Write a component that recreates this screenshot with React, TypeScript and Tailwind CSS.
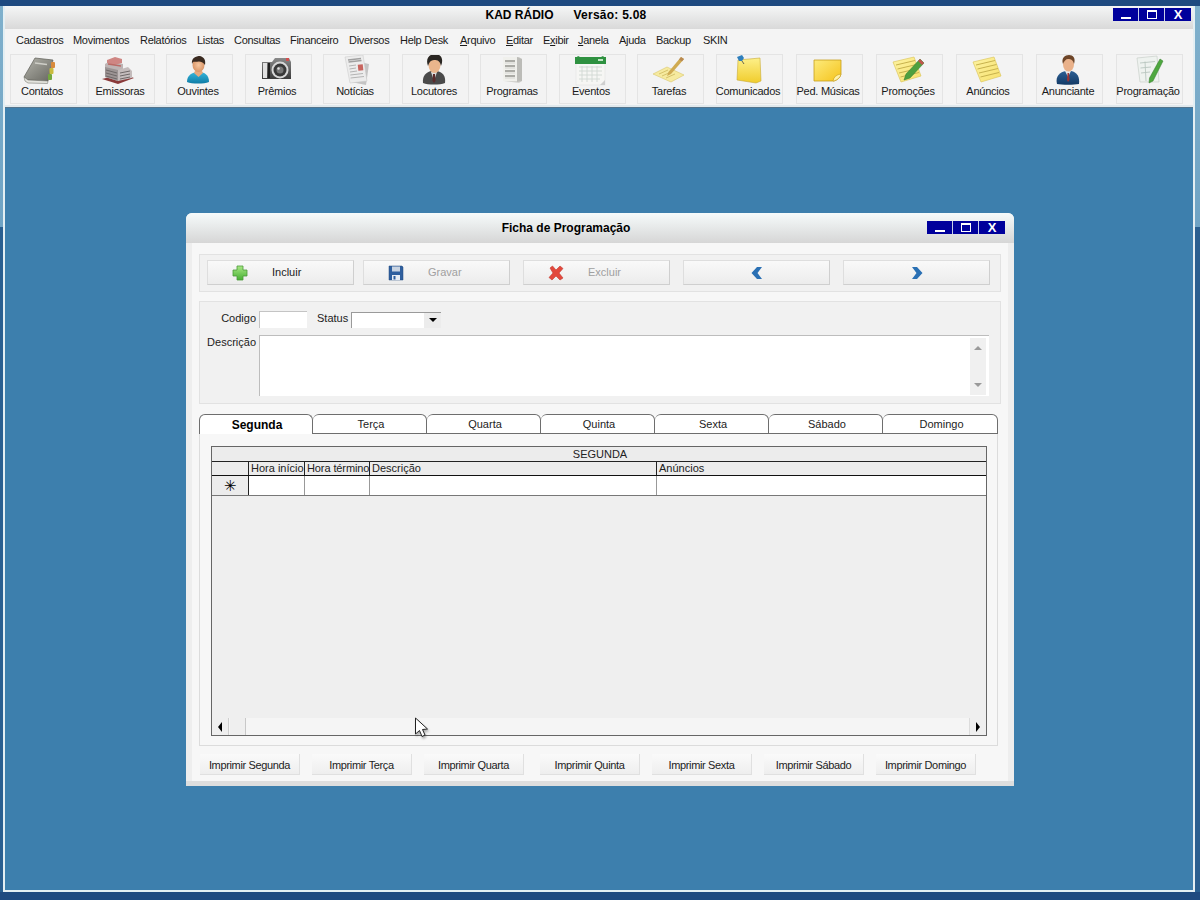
import React from "react";

const FONT = "font-['Liberation_Sans',Arial,sans-serif]";

function Contatos() {
  return (
    <svg width="48" height="32" viewBox="0 0 48 32">
      <defs>
        <linearGradient id="c1" x1="0" y1="0" x2="1" y2="1"><stop offset="0" stopColor="#b4b4ac" /><stop offset="1" stopColor="#66665f" /></linearGradient>
      </defs>
      <path d="M6 22 L17 3 L35 5 L30 26 L10 25 Z" fill="url(#c1)" stroke="#5d5d56" strokeWidth=".7" />
      <path d="M6 22 L10 25 L30 26 L29.5 28.5 L10 28 Q6 27 6 22 Z" fill="#e4e4de" stroke="#66665f" strokeWidth=".5" />
      <path d="M17 8 L29 9.5" stroke="#cfcfc8" strokeWidth="1.5" />
      <rect x="33" y="7" width="4" height="6" rx="1" fill="#d98a3c" />
      <rect x="31.5" y="13" width="4" height="6" rx="1" fill="#c9bb3e" />
      <rect x="30" y="19" width="4" height="6" rx="1" fill="#74a83e" />
    </svg>
  );
}
function Emissoras() {
  return (
    <svg width="48" height="32" viewBox="0 0 48 32">
      <path d="M6 24 L22 29 L38 23 L26 19 Z" fill="#8a3a3a" />
      <path d="M9 9 L14 6 L27 9 L27 23 L22 26 L9 22 Z" fill="#bdb4b4" />
      <path d="M11 5 L19 2 L26 4 L26 8 L18 10 L11 8 Z" fill="#cf8683" />
      <path d="M9 12 L22 15 L22 26 L9 22 Z" fill="#9c9494" />
      <path d="M22 15 L32 12 L36 16 L36 23 L22 26 Z" fill="#c4bcbc" />
      <path d="M10 15 L21 18 M10 18 L21 21 M10 21 L21 24 M24 18 L34 16 M24 21 L34 19 M24 24 L34 22" stroke="#6e6868" strokeWidth="1" />
      <path d="M12 9 L25 11" stroke="#bb6a66" strokeWidth="1.5" />
    </svg>
  );
}
function Ouvintes() {
  return (
    <svg width="48" height="32" viewBox="0 0 48 32">
      <defs>
        <linearGradient id="o1" x1="0" y1="0" x2="0" y2="1"><stop offset="0" stopColor="#35b6dc" /><stop offset="1" stopColor="#0f7ca6" /></linearGradient>
        <radialGradient id="o2"><stop offset="0" stopColor="#f6c6a0" /><stop offset="1" stopColor="#d99567" /></radialGradient>
      </defs>
      <path d="M13 27 C13 20 18 17.5 24 17 C31 17 35 20 35 27 C30 29 18 29 13 27 Z" fill="url(#o1)" />
      <path d="M20 18 L24.5 22 L29 18 L27 14 L22 14 Z" fill="#e6a87e" />
      <ellipse cx="24.5" cy="10" rx="6" ry="7" fill="url(#o2)" />
      <path d="M18 9 C17 3 22 1 26 1 C30 2 32 5 31 10 C29 7 27 6.5 25 6.5 C22 7 20 6.5 19 7 Z" fill="#3a2a20" />
    </svg>
  );
}
function Premios() {
  return (
    <svg width="48" height="32" viewBox="0 0 48 32">
      <defs>
        <linearGradient id="p1" x1="0" y1="0" x2="0" y2="1"><stop offset="0" stopColor="#8a8a8a" /><stop offset="1" stopColor="#3a3a3a" /></linearGradient>
      </defs>
      <path d="M9 7 H19 L22 3 H36 L38 7 V24 H9 Z" fill="url(#p1)" />
      <rect x="10" y="8" width="4" height="15" fill="#e0e0e0" />
      <rect x="15" y="8" width="2" height="15" fill="#1f1f1f" />
      <circle cx="27" cy="15" r="8.5" fill="#d7d7d7" />
      <circle cx="27" cy="15" r="6.5" fill="#383838" />
      <circle cx="27" cy="15" r="3.5" fill="#777" />
      <circle cx="25.5" cy="13.5" r="1.2" fill="#ddd" />
      <rect x="33" y="3" width="3" height="3" fill="#d05050" />
    </svg>
  );
}
function Noticias() {
  return (
    <svg width="48" height="32" viewBox="0 0 48 32">
      <path d="M19 5 L38 9 L35 30 L20 27 Z" fill="#c4c4c4" />
      <path d="M14 2 L32 0 L36 26 L19 28 Z" fill="#ececec" stroke="#c6c6c6" strokeWidth=".5" />
      <path d="M17 5 L30 3.5 M17.5 7 L30.5 5.5" stroke="#a0a0a0" strokeWidth="1.4" />
      <path d="M18 11 L25 10 M18.5 14 L25 13 M19 17 L26 16 M19.3 20 L32 18.5 M19.6 23 L33 21.5" stroke="#b4b4b4" strokeWidth="1" />
      <rect x="27" y="9.5" width="5" height="6" fill="#c8655f" transform="rotate(-6 29 12)" />
    </svg>
  );
}
function Locutores() {
  return (
    <svg width="48" height="32" viewBox="0 0 48 32">
      <path d="M13 28 C12 20 17 17 21 16 H27 C32 17 36 20 35 28 C30 30 18 30 13 28 Z" fill="#4a4a4a" />
      <path d="M21 17 L24 26 L27 17 Z" fill="#dcdcdc" />
      <path d="M23 19 H25 L25.5 26 L24 28 L22.5 26 Z" fill="#5c2a2a" />
      <ellipse cx="24.5" cy="10" rx="6" ry="8" fill="#eab58c" />
      <path d="M18 11 C15 3 20 -1 25 -1 C31 -1 34 4 31 11 C30 6 28 5 24 5 C21 5 19 7 18 11 Z" fill="#2a2622" />
    </svg>
  );
}
function Programas() {
  return (
    <svg width="48" height="32" viewBox="0 0 48 32">
      <path d="M15 2 H31 L34 4 V26 L31 28 L16 26 Z" fill="#d4d4d0" />
      <path d="M15 2 H29 V26 H15 Z" fill="#f0f0ec" />
      <path d="M29 2 L34 4 V26 L29 27 Z" fill="#bcbcb8" />
      <path d="M17 6 H27 M17 11 H27 M17 16 H27 M17 21 H27" stroke="#94948f" strokeWidth="1.6" />
      <path d="M17 8 H27 M17 13 H27 M17 18 H27 M17 23 H27" stroke="#d4d4d0" strokeWidth="1" />
    </svg>
  );
}
function Eventos() {
  return (
    <svg width="48" height="32" viewBox="0 0 48 32">
      <rect x="9" y="4" width="29" height="26" fill="#f6f6f4" stroke="#ddd" strokeWidth=".5" />
      <path d="M8 2 H10 L11 1 L13 2 H34 L36 1 L37 2 H39 V9 H8 Z" fill="#2e9140" />
      <rect x="31" y="4" width="5" height="2" fill="#bfe5c3" />
      <path d="M12 12 H35 M12 16 H35 M12 20 H35 M12 24 H33 M15 11 V27 M20 11 V27 M25 11 V27 M30 11 V27" stroke="#d0d8d2" strokeWidth=".9" />
      <path d="M33 30 L38 25 V30 Z" fill="#cfcfcf" />
    </svg>
  );
}
function Tarefas() {
  return (
    <svg width="48" height="32" viewBox="0 0 48 32">
      <path d="M8 19 L22 12 L39 20 L26 27 Z" fill="#f6ea9f" stroke="#d8c66c" strokeWidth=".6" />
      <path d="M14 19 L23 15 M17 21 L26 17 M21 23 L30 19" stroke="#cdb85d" strokeWidth=".8" />
      <path d="M36 2 L39 4 L26 19 L22 21 L23.5 17 Z" fill="#d0ab52" />
      <path d="M36 2 L39 4 L37 6.5 L34 4.5 Z" fill="#b98a52" />
    </svg>
  );
}
function Comunicados() {
  return (
    <svg width="48" height="32" viewBox="0 0 48 32">
      <defs>
        <linearGradient id="k1" x1="0" y1="0" x2="0" y2="1"><stop offset="0" stopColor="#fdf089" /><stop offset="1" stopColor="#f0cc2c" /></linearGradient>
      </defs>
      <path d="M14 5 L36 3 L37 26 L32 28 L13 25 Z" fill="url(#k1)" stroke="#c7a936" strokeWidth=".6" />
      <path d="M13 2 L18 0 L20 3 L18 6 L15 6 Z" fill="#2f7fbd" />
      <path d="M18 6 L20 9" stroke="#444" strokeWidth=".8" />
    </svg>
  );
}
function PedMusicas() {
  return (
    <svg width="48" height="32" viewBox="0 0 48 32">
      <defs>
        <linearGradient id="m1" x1="0" y1="0" x2="1" y2="1"><stop offset="0" stopColor="#fdeb7b" /><stop offset="1" stopColor="#f5c31c" /></linearGradient>
      </defs>
      <path d="M10 5 H37 V19 Q36 24 30 26 H10 Z" fill="url(#m1)" stroke="#c69e1d" strokeWidth=".8" />
      <path d="M29 26 Q30 20 37 19 Q36 24 30 26 Z" fill="#fff2a8" stroke="#c69e1d" strokeWidth=".6" />
    </svg>
  );
}
function Note({ id }: { id: string }) {
  return (
    <>
      <defs>
        <linearGradient id={id} x1="0" y1="0" x2="1" y2="1"><stop offset="0" stopColor="#fdf3a3" /><stop offset="1" stopColor="#f7e06b" /></linearGradient>
      </defs>
      <path d="M9 7 L30 2 L37 21 L17 27 Z" fill={`url(#${id})`} stroke="#dcc760" strokeWidth=".7" />
      <path d="M12 10 L31 5.5 M13.5 14 L32.5 9.5 M15 18 L34 13.5 M16.5 22 L35 17.5" stroke="#c7b24e" strokeWidth="1" />
    </>
  );
}
function Promocoes() {
  return (
    <svg width="48" height="32" viewBox="0 0 48 32">
      <Note id="n1" />
      <path d="M36 4 L40 8 L26 23 L20 25 L22 19 Z" fill="#4ea03f" stroke="#2f7a2a" strokeWidth=".5" />
      <path d="M36 4 L40 8 L38 10 L34 6 Z" fill="#c2544c" />
    </svg>
  );
}
function Anuncios() {
  return (
    <svg width="48" height="32" viewBox="0 0 48 32">
      <Note id="n2" />
    </svg>
  );
}
function Anunciante() {
  return (
    <svg width="48" height="32" viewBox="0 0 48 32">
      <defs>
        <linearGradient id="a1" x1="0" y1="0" x2="0" y2="1"><stop offset="0" stopColor="#2c5f94" /><stop offset="1" stopColor="#133a66" /></linearGradient>
      </defs>
      <path d="M13 29 C11 21 16 17 22 16 H27 C33 17 36 22 35 29 C30 30 18 30 13 29 Z" fill="url(#a1)" />
      <path d="M21 16 L24 22 L27 16 Z" fill="#e8e8e8" />
      <path d="M23.5 18 H25 L25.5 25 L24 27 L23 25 Z" fill="#9a3434" />
      <ellipse cx="24.5" cy="9.5" rx="5.5" ry="7" fill="#e9b18a" />
      <path d="M19 9 C17 3 21 0 25 0 C29 0 32 3 30 9 C29 5 27 4 24 4 C22 4 20 6 19 9 Z" fill="#6d4528" />
    </svg>
  );
}
function Programacao() {
  return (
    <svg width="48" height="32" viewBox="0 0 48 32">
      <path d="M13 3 L33 1 L35 27 L16 27 Z" fill="#eef2ef" stroke="#c8d0ca" strokeWidth=".7" />
      <path d="M16 8 L31 6.5 M16.5 13 L27 12 M17 18 L26 17 M21 6.5 L22 26" stroke="#b9c6bf" strokeWidth=".9" />
      <path d="M36 4 L39 6 L29 26 L25 28 L25.5 23 Z" fill="#4ea83f" stroke="#327a2a" strokeWidth=".5" />
    </svg>
  );
}

const TOOLS: [string, React.FC][] = [
  ["Contatos", Contatos],
  ["Emissoras", Emissoras],
  ["Ouvintes", Ouvintes],
  ["Prêmios", Premios],
  ["Notícias", Noticias],
  ["Locutores", Locutores],
  ["Programas", Programas],
  ["Eventos", Eventos],
  ["Tarefas", Tarefas],
  ["Comunicados", Comunicados],
  ["Ped. Músicas", PedMusicas],
  ["Promoções", Promocoes],
  ["Anúncios", Anuncios],
  ["Anunciante", Anunciante],
  ["Programação", Programacao],
];

function WinButtons() {
  return (
    <div className="flex h-[13px] w-[78px] bg-[#00009c]">
      <div className="flex w-[25px] items-end justify-center pb-[2px]">
        <div className="h-[2px] w-[10px] bg-white" />
      </div>
      <div className="flex w-[27px] items-center justify-center border-x border-[#c8d0e8]">
        <div className="h-[9px] w-[10px] border border-t-2 border-white" />
      </div>
      <div className="flex w-[26px] items-center justify-center text-[13px] leading-none font-bold text-white">X</div>
    </div>
  );
}

function MenuBar() {
  const items: [string, string?][] = [
    ["Cadastros"],
    ["Movimentos"],
    ["Relatórios"],
    ["Listas"],
    ["Consultas"],
    ["Financeiro"],
    ["Diversos"],
    ["Help Desk"],
    ["Arquivo", "A"],
    ["Editar", "E"],
    ["Exibir", "x"],
    ["Janela", "J"],
    ["Ajuda"],
    ["Backup"],
    ["SKIN"],
  ];
  return (
    <div className="grid h-[21px] grid-cols-[57px_67px_57px_37px_56px_59px_51px_60px_46px_37px_35px_41px_37px_47px_40px] items-center bg-[#f4f4f4] pt-[1px] pl-[11px] text-[11px] tracking-[-0.3px] text-[#1a1a1a]">
      {items.map(([label, u]) => {
        if (!u) return <span key={label}>{label}</span>;
        const i = label.indexOf(u);
        return (
          <span key={label}>
            {label.slice(0, i)}
            <span className="underline">{u}</span>
            {label.slice(i + 1)}
          </span>
        );
      })}
    </div>
  );
}

function Toolbar() {
  return (
    <div className="relative grid h-[57px] shrink-0 grid-cols-[78px_78px_79px_78px_79px_78px_79px_78px_79px_80px_80px_80px_80px_80px_67px] border-b-2 border-[#e0e8ec] bg-[#f4f4f4] pt-[4px] pl-[5px] shadow-[0_1px_0_#54748c]">
      {TOOLS.map(([label, Icon]) => (
        <div
          key={label}
          className="flex h-[50px] w-[67px] flex-col items-center border border-[#e4e4e4] bg-[#f3f3f3] pr-[3px]"
        >
          <div className="h-[29px]">
            <Icon />
          </div>
          <span className="text-[11px] leading-[14px] tracking-[-0.25px] whitespace-nowrap text-[#1a1a1a]">{label}</span>
        </div>
      ))}
    </div>
  );
}

function PlusIcon() {
  return (
    <svg width="16" height="16" viewBox="0 0 16 16">
      <defs>
        <linearGradient id="pl" x1="0" y1="0" x2="0" y2="1"><stop offset="0" stopColor="#a8e884" /><stop offset="1" stopColor="#46b033" /></linearGradient>
      </defs>
      <path d="M5 1 H11 V5 H15 V11 H11 V15 H5 V11 H1 V5 H5 Z" fill="url(#pl)" stroke="#4b9a3a" strokeWidth=".8" />
    </svg>
  );
}
function SaveIcon() {
  return (
    <svg width="16" height="16" viewBox="0 0 16 16">
      <path d="M1 1 H14 L15 2 V15 H1 Z" fill="#2f5f9e" stroke="#23497c" strokeWidth=".5" />
      <rect x="4" y="1.5" width="8" height="5" fill="#c9d4e2" />
      <rect x="4" y="10" width="8" height="5" fill="#e8edf3" />
      <rect x="5.5" y="11" width="2" height="3.5" fill="#2f5f9e" />
    </svg>
  );
}
function XIcon() {
  return (
    <svg width="16" height="16" viewBox="0 0 16 16">
      <path d="M2 3 L4.5 1 L8 5 L12 1 L15 3.5 L11 8 L15 13 L12 15 L8 11 L4 15 L1 12.5 L5 8 Z" fill="#e2483c" stroke="#c23a30" strokeWidth=".6" />
    </svg>
  );
}
function Chevron({ right }: { right?: boolean }) {
  return (
    <svg width="12" height="14" viewBox="0 0 12 14">
      <path d={right ? "M1 1 H6 L11.5 7 L6 13 H1 L5.5 7 Z" : "M11 1 H6 L.5 7 L6 13 H11 L6.5 7 Z"} fill="#2a70b4" />
    </svg>
  );
}

const BTN =
  "h-[25px] w-[147px] border border-[#dedede] border-b-[#cfcfcf] border-r-[#cfcfcf] bg-gradient-to-b from-[#f9f9f9] to-[#ececec] flex items-center";

function ActionBar() {
  return (
    <div className="grid h-[38px] grid-cols-[156px_160px_160px_160px_147px] border border-[#e2e2e2] bg-[#f1f1f1] pt-[5px] pl-[7px] text-[11px]">
      <div className={`${BTN} pl-[24px]`}>
        <PlusIcon />
        <span className="ml-[24px] text-[#222]">Incluir</span>
      </div>
      <div className={`${BTN} pl-[24px]`}>
        <SaveIcon />
        <span className="ml-[24px] text-[#a0a0a0]">Gravar</span>
      </div>
      <div className={`${BTN} pl-[24px]`}>
        <XIcon />
        <span className="ml-[24px] text-[#a0a0a0]">Excluir</span>
      </div>
      <div className={`${BTN} justify-center`}>
        <Chevron />
      </div>
      <div className={`${BTN} justify-center`}>
        <Chevron right />
      </div>
    </div>
  );
}

function FormPanel() {
  return (
    <div className="mt-[9px] h-[103px] border border-[#e2e2e2] bg-[#f1f1f1] pt-[9px] pl-[7px] text-[11px] text-[#222]">
      <div className="flex h-[17px] items-center">
        <span className="w-[49px] pb-[2px] text-right">Codigo</span>
        <div className="ml-[3px] h-[17px] w-[48px] border-t border-l border-[#c4c4c4] bg-white" />
        <span className="ml-[10px] w-[31px] pb-[2px]">Status</span>
        <div className="ml-[3px] flex h-[16px] w-[90px] justify-end border-t border-l border-[#9a9a9a] bg-white">
          <div className="flex w-[17px] items-center justify-center bg-[#ececec]">
            <div className="h-0 w-0 border-x-[4px] border-t-[4px] border-x-transparent border-t-black" />
          </div>
        </div>
      </div>
      <div className="mt-[7px] flex">
        <span className="-mt-[1px] w-[49px] text-right">Descrição</span>
        <div className="ml-[3px] flex h-[61px] w-[730px] justify-end border-t border-l border-[#bdbdbd] bg-white">
          <div className="mt-[2px] mr-[3px] flex h-[57px] w-[16px] flex-col items-center justify-between bg-[#f0f0f0] py-[8px]">
            <div className="h-0 w-0 border-x-[4px] border-b-[4px] border-x-transparent border-b-[#9a9a9a]" />
            <div className="h-0 w-0 border-x-[4px] border-t-[4px] border-x-transparent border-t-[#9a9a9a]" />
          </div>
        </div>
      </div>
    </div>
  );
}

function Tabs() {
  const days = ["Segunda", "Terça", "Quarta", "Quinta", "Sexta", "Sábado", "Domingo"];
  return (
    <div className="mt-[10px] flex h-[20px] w-[799px] text-[11px]">
      {days.map((d, i) => (
        <div
          key={d}
          className={
            i === 0
              ? "flex w-[114px] items-center justify-center rounded-t-[6px] border-x border-t border-[#6e6e6e] bg-white pt-[1px] pl-[2px] text-[12px] font-bold text-black"
              : "flex w-[114px] items-center justify-center rounded-t-[6px] border border-l-0 border-[#6e6e6e] bg-white pt-[1px] pl-[3px] text-[#222] last:w-[115px]"
          }
        >
          {d}
        </div>
      ))}
    </div>
  );
}

function DataGrid() {
  const cols = "grid grid-cols-[37px_56px_65px_287px_330px]";
  return (
    <div className="relative flex h-[290px] w-[776px] flex-col border border-[#666] bg-[#efefef] text-[11px] text-[#222]">
      <div className="h-[15px] border-b border-[#222] bg-[#ececec] pl-[2px] text-center leading-[14px]">SEGUNDA</div>
      <div className={`${cols} h-[14px] border-b border-[#111] bg-[#ececec] leading-[13px]`}>
        <div className="border-r border-[#222]" />
        <div className="border-r border-[#222] pl-[2px] whitespace-nowrap">Hora início</div>
        <div className="border-r border-[#222] pl-[2px] tracking-[-0.1px] whitespace-nowrap">Hora término</div>
        <div className="border-r border-[#222] pl-[2px]">Descrição</div>
        <div className="pl-[2px]">Anúncios</div>
      </div>
      <div className={`${cols} h-[20px] border-b border-[#777] bg-white`}>
        <div className="flex items-center justify-center border-r border-[#222] bg-[#ececec] text-[15px] leading-none text-black">✳</div>
        <div className="border-r border-[#999]" />
        <div className="border-r border-[#999]" />
        <div className="border-r border-[#999]" />
        <div />
      </div>
      <div className="flex-1" />
      <div className="flex h-[17px] items-stretch bg-[#f5f5f5]">
        <div className="flex w-[17px] items-center justify-center border-r border-[#cfcfcf] bg-[#efefef]">
          <div className="h-0 w-0 border-y-[5px] border-r-[4px] border-y-transparent border-r-black" />
        </div>
        <div className="ml-[1px] w-[16px] border-r border-[#c8c8c8] bg-[#efefef]" />
        <div className="flex-1" />
        <div className="flex w-[17px] items-center justify-center border-l border-[#dcdcdc] bg-[#efefef]">
          <div className="h-0 w-0 border-y-[5px] border-l-[4px] border-y-transparent border-l-black" />
        </div>
      </div>
    </div>
  );
}

function PrintButtons() {
  const labels = ["Segunda", "Terça", "Quarta", "Quinta", "Sexta", "Sábado", "Domingo"];
  return (
    <div className="mt-[8px] grid grid-cols-[112px_112px_116px_112px_112px_112px_100px] pl-[1px] text-[11px] tracking-[-0.35px] text-[#222]">
      {labels.map((l) => (
        <div
          key={l}
          className="flex h-[21px] w-[100px] items-center justify-center border-r border-b border-[#e0e0e0] bg-gradient-to-b from-[#fafafa] to-[#eeeeee] pt-[2px]"
        >
          Imprimir {l}
        </div>
      ))}
    </div>
  );
}

function Cursor() {
  return (
    <svg className="absolute top-[504px] left-[228px] drop-shadow-[1px_2px_1px_rgba(0,0,0,0.3)]" width="16" height="22" viewBox="0 0 16 22">
      <path d="M1.5 1 V17 L5.5 13.5 L8 19.5 L11 18 L8.5 12.5 L13.5 12 Z" fill="#fff" stroke="#222" strokeWidth="1" />
    </svg>
  );
}

function Dialog() {
  return (
    <div className="relative mt-[106px] ml-[181px] flex h-[573px] w-[828px] flex-col rounded-t-[6px] border-b-[5px] border-[#dedede] bg-[#eeeeee] px-[6px]">
      <div className="absolute inset-x-0 top-0 h-[30px] rounded-t-[6px] bg-gradient-to-b from-[#f6fbfb] to-[#d6d6d6]" />
      <div className="relative flex h-[28px] shrink-0 items-center justify-center pt-[2px] pr-[68px]">
        <span className="text-[12px] font-bold text-black">Ficha de Programação</span>
        <div className="absolute top-[8px] right-[3px]">
          <WinButtons />
        </div>
      </div>
      <div className="relative mt-[2px] flex-1 bg-[#f7f7f7] px-[7px] pt-[11px]">
        <ActionBar />
        <FormPanel />
        <Tabs />
        <div className="h-[312px] w-[799px] border-x border-b border-[#dcdcdc] pt-[12px] pl-[11px]">
          <DataGrid />
        </div>
        <PrintButtons />
      </div>
      <Cursor />
    </div>
  );
}

export default function App() {
  return (
    <div className={`${FONT} h-[900px] w-[1200px] overflow-hidden bg-[#1f4a80] pt-[6px] pb-[8px]`}>
      <div className="flex h-[886px] w-[1200px] bg-[linear-gradient(180deg,#7fb0cc_0,#6fa3c4_25%,#2a5f90_25%,#2a5f90_100%)] pl-[3px]">
        <div className="flex h-full w-[1192px] flex-col border-x-2 border-b-2 border-[#e4eff3] bg-[#3d7fad]">
          <div className="relative flex h-[23px] shrink-0 items-center justify-center bg-gradient-to-b from-[#f5f6f6] to-[#d9d9d9] pr-[66px] pb-[5px]">
            <span className="text-[12px] font-bold text-black">KAD RÁDIO</span>
            <span className="ml-[20px] text-[12px] font-bold tracking-[0.25px] text-black">Versão: 5.08</span>
            <div className="absolute top-[2px] right-[2px]">
              <WinButtons />
            </div>
          </div>
          <MenuBar />
          <Toolbar />
          <Dialog />
        </div>
      </div>
    </div>
  );
}
